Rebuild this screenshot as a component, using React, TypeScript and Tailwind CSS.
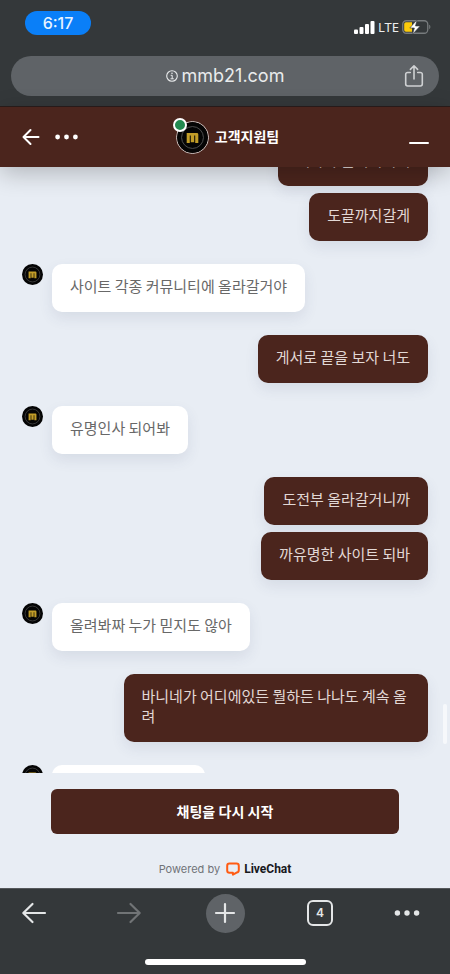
import React from "react";

type Message = { from: "agent" | "visitor"; texts: string[] };

const messages: Message[] = [
  { from: "visitor", texts: ["내가다 올려버리게", "도끝까지갈게"] },
  { from: "agent", texts: ["사이트 각종 커뮤니티에 올라갈거야"] },
  { from: "visitor", texts: ["게서로 끝을 보자 너도"] },
  { from: "agent", texts: ["유명인사 되어봐"] },
  { from: "visitor", texts: ["도전부 올라갈거니까", "까유명한 사이트 되바"] },
  { from: "agent", texts: ["올려봐짜 누가 믿지도 않아"] },
  { from: "visitor", texts: ["바니네가 어디에있든 뭘하든 나나도 계속 올려"] },
];

function Avatar({ className }: { className: string }) {
  return (
    <svg viewBox="0 0 32 32" className={className} aria-hidden="true">
      <circle cx="16" cy="16" r="16" fill="#050505" />
      <circle cx="16" cy="16" r="11.3" fill="none" stroke="#5a5a5a" strokeWidth="0.9" />
      <path
        d="M10 11.4H20.6Q22 11.4 22 12.8V21.8H18.8V14H17.8V20.8H14.2V14H13.2V21.8H10Z"
        fill="#c29d28"
      />
    </svg>
  );
}

function StatusBar() {
  return (
    <div className="flex h-[56px] items-start justify-between pr-[19px] pl-[25px]">
      <div className="mt-[11px] flex h-6 w-[66px] items-center justify-center rounded-full bg-[#0a7ff8] text-base font-medium text-[#e8f3ff]">
        6:17
      </div>
      <div className="mt-[17px] flex h-5 items-center gap-[3px]">
        <svg viewBox="0 0 21 13" className="h-[13px] w-[21px]" fill="#fff" aria-hidden="true">
          <rect x="0" y="8.5" width="4" height="4.5" rx="1" />
          <rect x="5.5" y="6" width="4" height="7" rx="1" />
          <rect x="11" y="3" width="4" height="10" rx="1" />
          <rect x="16.5" y="0" width="4" height="13" rx="1" />
        </svg>
        <span className="font-['Noto_Sans',sans-serif] text-[13px] leading-5 text-[#eceeee]">LTE</span>
        <svg viewBox="0 0 29 16" className="h-4 w-[29px]" aria-hidden="true">
          <rect x="0.75" y="1.75" width="25" height="12.5" rx="3.5" fill="none" stroke="#777b7d" strokeWidth="1.3" />
          <path d="M27.2 5.8v4.4c1.6-.6 1.6-3.8 0-4.4" fill="#777b7d" />
          <path d="M4 3.2h6v9.6H4a1.8 1.8 0 0 1-1.8-1.8V5A1.8 1.8 0 0 1 4 3.2" fill="#fccb0b" />
          <path d="M15 .8 7.8 9h4.6L10.6 15.2 18.2 7h-4.7z" fill="#fff" stroke="#34383a" strokeWidth="0.6" />
        </svg>
      </div>
    </div>
  );
}

function AddressBar() {
  return (
    <div className="relative mx-[11px] flex h-10 items-center justify-center rounded-full bg-[#5f6367] text-[#e9ebec]">
      <a href="#site" className="flex items-center gap-1 text-[18px] leading-6">
        <svg viewBox="0 0 12 12" className="size-3" fill="none" stroke="currentColor" aria-hidden="true">
          <circle cx="6" cy="6" r="5.3" strokeWidth="1.1" />
          <path d="M4.7 5.3H6.2V8.8M4.5 8.8H7.8" strokeWidth="1" />
          <circle cx="6" cy="3.3" r="0.8" fill="currentColor" stroke="none" />
        </svg>
        mmb21.com
      </a>
      <button type="button" aria-label="공유" className="absolute right-[15px]">
        <svg viewBox="0 0 20 24" className="h-6 w-5" fill="none" stroke="#cfd1d3" strokeWidth="1.6" strokeLinecap="round" strokeLinejoin="round" aria-hidden="true">
          <path d="M6.3 8.5H3.6A1.9 1.9 0 0 0 1.7 10.4V20.1A1.9 1.9 0 0 0 3.6 22H16.4A1.9 1.9 0 0 0 18.3 20.1V10.4A1.9 1.9 0 0 0 16.4 8.5H13.7M10 15V2.5M6.4 5.4 10 1.8 13.6 5.4" />
        </svg>
      </button>
    </div>
  );
}

function ChatHeader() {
  return (
    <header className="relative z-10 flex h-[60px] shrink-0 items-center justify-between bg-[#4b251d] pr-[21px] pl-[22px] text-white shadow-[0_6px_24px_rgba(0,0,0,0.24)]">
      <div className="flex w-[84px] items-center gap-[15px]">
        <button type="button" aria-label="뒤로">
          <svg viewBox="0 0 18 18" className="size-[18px]" fill="none" stroke="#fff" strokeWidth="2" strokeLinecap="round" strokeLinejoin="round" aria-hidden="true">
            <path d="M16.5 9H1.8M8.5 2 1.5 9 8.5 16" />
          </svg>
        </button>
        <button type="button" aria-label="메뉴">
          <svg viewBox="0 0 23 6" className="h-[6px] w-[23px]" fill="#fff" aria-hidden="true">
            <circle cx="2.6" cy="3" r="2.4" />
            <circle cx="11.5" cy="3" r="2.4" />
            <circle cx="20.4" cy="3" r="2.4" />
          </svg>
        </button>
      </div>
      <div className="flex items-center gap-[6px]">
        <div className="relative">
          <Avatar className="size-[33px] rounded-full border border-[#d0c8c6]" />
          <span className="absolute -top-[3px] -left-[3px] size-[14px] rounded-full border-2 border-white bg-[#228a50]" />
        </div>
        <h1 className="text-[14px] leading-5 font-bold">고객지원팀</h1>
      </div>
      <div className="flex w-20 justify-end">
        <button type="button" aria-label="최소화" className="flex h-[14px] w-5 items-end">
          <span className="h-[2px] w-full rounded-full bg-white" />
        </button>
      </div>
    </header>
  );
}

function MessageGroup({ message }: { message: Message }) {
  const agent = message.from === "agent";
  return (
    <li className={agent ? "flex items-start gap-[9px]" : "flex justify-end"}>
      {agent && <Avatar className="size-[21px] shrink-0" />}
      <div className={agent ? "flex flex-col items-start gap-[7px]" : "flex max-w-[75%] flex-col items-end gap-[7px]"}>
        {message.texts.map((text) => (
          <p
            key={text}
            className={
              agent
                ? "rounded-[10px] bg-white px-[18px] pt-3 pb-4 text-[15px] leading-5 break-all text-[#686868] shadow-[0_6px_14px_rgba(60,70,110,0.10)]"
                : "rounded-[10px] bg-[#4b251d] px-[18px] pt-3 pb-4 text-[15px] leading-5 break-all text-[#e2d8d5] shadow-[0_6px_14px_rgba(60,70,110,0.10)]"
            }
          >
            {text}
          </p>
        ))}
      </div>
    </li>
  );
}

function PendingMessage() {
  return (
    <li className="flex items-start gap-[9px]">
      <Avatar className="size-[21px] shrink-0" />
      <div className="h-12 w-[153px] rounded-[10px] bg-white" />
    </li>
  );
}

function LiveChatFooter() {
  return (
    <footer className="shrink-0 px-[51px] pt-4 pb-[10px]">
      <button type="button" className="block h-[45px] w-full rounded-md bg-[#4b251d] text-[14px] leading-5 font-bold text-white">
        채팅을 다시 시작
      </button>
      <div className="mt-[26px] flex h-[18px] items-center justify-center gap-[6px] text-[11px] text-[#707378]">
        <span>Powered by</span>
        <a href="#livechat" className="flex items-center gap-1 font-['Roboto',sans-serif] text-xs font-bold text-[#17181c]">
          <svg viewBox="0 0 14 14" className="size-[14px]" fill="none" stroke="#ff5b12" strokeWidth="2" strokeLinejoin="round" aria-hidden="true">
            <path d="M3.5 1.6H10.5Q12.8 1.6 12.8 3.9V7.9Q12.8 10.2 10.6 10.6L6.9 12.6V10.8H3.5Q1.2 10.8 1.2 8.5V3.9Q1.2 1.6 3.5 1.6Z" />
          </svg>
          LiveChat
        </a>
      </div>
    </footer>
  );
}

function BrowserToolbar() {
  return (
    <nav className="flex h-[86px] shrink-0 flex-col justify-between border-t border-[#55585b] bg-[#34383a] pb-[9px]">
      <div className="mt-[4px] grid h-10 grid-cols-[68fr_122fr_70fr_120fr_54fr] items-center justify-items-center pr-4">
        <button type="button" aria-label="이전 페이지">
          <svg viewBox="0 0 26 22" className="h-[22px] w-[26px]" fill="none" stroke="#e4e6e7" strokeWidth="2.2" strokeLinecap="round" strokeLinejoin="round" aria-hidden="true">
            <path d="M24 11H2.5M11.5 2 2.3 11 11.5 20" />
          </svg>
        </button>
        <button type="button" aria-label="다음 페이지">
          <svg viewBox="0 0 26 22" className="h-[22px] w-[26px]" fill="none" stroke="#717476" strokeWidth="2.2" strokeLinecap="round" strokeLinejoin="round" aria-hidden="true">
            <path d="M2 11H23.5M14.5 2 23.7 11 14.5 20" />
          </svg>
        </button>
        <button type="button" aria-label="새 탭" className="flex size-[39px] items-center justify-center rounded-full bg-[#5f6367]">
          <svg viewBox="0 0 22 22" className="size-[22px]" stroke="#e4e6e7" strokeWidth="2.2" strokeLinecap="round" aria-hidden="true">
            <path d="M11 2V20M2 11H20" />
          </svg>
        </button>
        <button type="button" aria-label="탭 목록" className="flex size-[26px] items-center justify-center rounded-md border-2 border-[#e4e6e7] text-xs font-semibold text-[#e4e6e7]">
          4
        </button>
        <button type="button" aria-label="더보기">
          <svg viewBox="0 0 26 6" className="h-[6px] w-[26px]" fill="#e4e6e7" aria-hidden="true">
            <circle cx="3.4" cy="3" r="2.7" />
            <circle cx="13" cy="3" r="2.7" />
            <circle cx="22.6" cy="3" r="2.7" />
          </svg>
        </button>
      </div>
      <div className="h-[6px] w-[161px] self-center rounded-full bg-white" />
    </nav>
  );
}

export default function App() {
  return (
    <div className="flex h-screen flex-col overflow-hidden bg-[#e8edf4] font-['Inter','Noto_Sans_CJK_KR',sans-serif]">
      <div className="h-[107px] shrink-0 border-b border-[#2a1d1b] bg-[#34383a]">
        <StatusBar />
        <AddressBar />
      </div>
      <ChatHeader />
      <main className="relative min-h-0 flex-1 overflow-hidden font-['Noto_Sans_CJK_KR',sans-serif]">
        <ul className="-mt-[29px] flex flex-col gap-[23px] px-[22px]">
          {messages.map((message) => (
            <MessageGroup key={message.texts[0]} message={message} />
          ))}
          <PendingMessage />
        </ul>
        <div className="absolute right-[3px] bottom-[29px] h-10 w-1 rounded-full bg-[#f6f8fb]" />
      </main>
      <LiveChatFooter />
      <BrowserToolbar />
    </div>
  );
}
